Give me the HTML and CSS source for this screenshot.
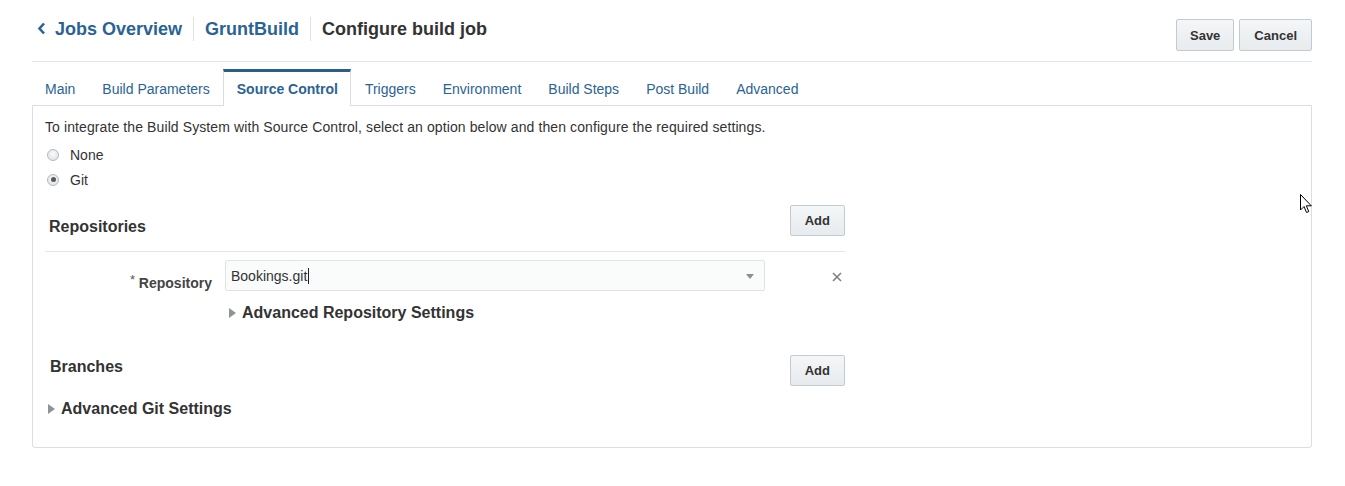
FILE: index.html
```html
<!DOCTYPE html>
<html>
<head>
<meta charset="utf-8">
<link rel="stylesheet" href="styles.css">
</head>
<body>
<div class="page">
  <div class="header">
    <div class="crumbs">
      <a class="crumb back">
        <svg class="chev" width="9" height="13" viewBox="0 0 9 13"><polyline points="7,1.5 2.5,6.5 7,11.5" fill="none" stroke="#2a6394" stroke-width="2.6"/></svg>
        Jobs Overview
      </a>
      <span class="sep"></span>
      <a class="crumb">GruntBuild</a>
      <span class="sep"></span>
      <span class="crumb current">Configure build job</span>
    </div>
    <div class="actions">
      <button class="btn">Save</button>
      <button class="btn">Cancel</button>
    </div>
  </div>

  <div class="tabs">
    <div class="tab">Main</div>
    <div class="tab">Build Parameters</div>
    <div class="tab active">Source Control</div>
    <div class="tab">Triggers</div>
    <div class="tab">Environment</div>
    <div class="tab">Build Steps</div>
    <div class="tab">Post Build</div>
    <div class="tab">Advanced</div>
  </div>

  <div class="panel">
    <p class="intro">To integrate the Build System with Source Control, select an option below and then configure the required settings.</p>
    <div class="radios">
      <label class="radio"><span class="dot"></span>None</label>
      <label class="radio"><span class="dot checked"></span>Git</label>
    </div>

    <div class="section">
      <div class="section-head bordered">
        <h3 class="section-title">Repositories</h3>
        <button class="btn">Add</button>
      </div>
      <div class="repo-row">
        <label class="field-label"><span class="req">*</span> Repository</label>
        <div class="select">
          <span class="select-text">Bookings.git<span class="caret"></span></span>
          <span class="select-arrow"></span>
        </div>
        <span class="remove">
          <svg width="10" height="10" viewBox="0 0 10 10"><path d="M1 1 L9 9 M9 1 L1 9" stroke="#7b8287" stroke-width="1.6"/></svg>
        </span>
      </div>
      <div class="disclosure repo-adv"><span class="tri"></span>Advanced Repository Settings</div>
    </div>

    <div class="section">
      <div class="section-head branches">
        <h3 class="section-title">Branches</h3>
        <button class="btn">Add</button>
      </div>
      <div class="disclosure git-adv"><span class="tri"></span>Advanced Git Settings</div>
    </div>
  </div>
</div>
<svg class="cursor" width="13" height="21" viewBox="0 0 13 21"><path d="M0.5 0.5 L0.5 16 L4 12.5 L6.5 18.5 L8.8 17.5 L6.3 11.8 L11.3 11.8 Z" fill="#fff" stroke="#000" stroke-width="1"/></svg>
</body>
</html>
```

FILE: styles.css
```css
* { box-sizing: border-box; }
html, body { margin: 0; padding: 0; background: #fff; }
body {
  font-family: "Liberation Sans", Arial, sans-serif;
  color: #333;
  position: relative;
  width: 1345px;
  height: 486px;
  overflow: hidden;
}
.page {
  margin-left: 32px;
  width: 1280px;
}
.header {
  display: flex;
  justify-content: space-between;
  height: 62px;
  border-bottom: 1px solid #e3e6e8;
}
.crumbs {
  display: flex;
  align-items: center;
  height: 24px;
  margin-top: 17px;
  padding-left: 5px;
}
.crumb {
  font-size: 18px;
  font-weight: bold;
  color: #2a6394;
  line-height: 24px;
  display: flex;
  align-items: center;
  white-space: nowrap;
}
.crumb.current { color: #333; }
.chev { margin-right: 9px; margin-top: -1px; }
.sep {
  width: 1px;
  height: 24px;
  background: #dde1e4;
  margin: 0 11px;
}
.actions {
  display: flex;
  gap: 5px;
  margin-top: 19px;
}
.btn {
  font-family: "Liberation Sans", Arial, sans-serif;
  font-size: 13px;
  font-weight: bold;
  color: #333;
  height: 32px;
  padding: 0 14px;
  border: 1px solid #c3cbd2;
  border-radius: 2px;
  background: linear-gradient(#f4f6f7, #e7ebee);
}
.actions .btn:first-child { padding: 0 13px; }
.tabs {
  display: flex;
  height: 44px;
  padding-top: 7px;
}
.tab {
  font-size: 14px;
  color: #2a6394;
  padding: 0 12.5px;
  height: 37px;
  line-height: 34px;
  border: 1px solid transparent;
  border-top: 3px solid transparent;
  border-bottom: none;
  white-space: nowrap;
}
.tab:first-child { padding-left: 12px; }
.tab.active {
  font-weight: bold;
  border-color: #d9dde0;
  border-top-color: #2c5f87;
  background: #fff;
  position: relative;
  z-index: 1;
}
.panel {
  margin-top: -1px;
  width: 1280px;
  height: 343px;
  border: 1px solid #dadee1;
  border-radius: 0 0 3px 3px;
  padding: 12px 12px 0 12px;
}
.intro {
  margin: 0;
  font-size: 14px;
  letter-spacing: 0.1px;
  line-height: 18px;
  color: #333;
}
.radios {
  margin-top: 6px;
  display: flex;
  flex-direction: column;
}
.radio {
  display: flex;
  align-items: center;
  height: 25px;
  font-size: 14px;
  color: #333;
  padding-left: 2px;
}
.dot {
  width: 12px;
  height: 12px;
  border-radius: 50%;
  border: 1px solid #b5b9bc;
  background: radial-gradient(circle at 50% 40%, #fafafa, #dcdfe1);
  margin-right: 11px;
  position: relative;
}
.dot.checked::after {
  content: "";
  position: absolute;
  left: 2.5px;
  top: 2.5px;
  width: 5px;
  height: 5px;
  border-radius: 50%;
  background: #555a5e;
}
.section {
  width: 800px;
}
.section-head {
  display: flex;
  justify-content: space-between;
  align-items: flex-end;
}
.section-head.bordered {
  margin-top: 13px;
  padding-bottom: 15px;
  border-bottom: 1px solid #e3e6e8;
}
.section-head .btn { height: 31px; }
.section-title {
  margin: 0 0 0 4px;
  font-size: 16px;
  line-height: 20px;
  font-weight: bold;
  color: #333;
  transform: translateY(1px);
}
.repo-row {
  display: flex;
  align-items: center;
  margin-top: 8px;
  height: 31px;
}
.field-label {
  width: 167px;
  text-align: right;
  font-size: 14px;
  font-weight: bold;
  color: #444;
  padding-top: 12px;
  white-space: nowrap;
}
.req { font-weight: normal; color: #555; font-size: 13px; vertical-align: 4px; }
.select {
  margin-left: 13px;
  width: 540px;
  height: 31px;
  border: 1px solid #dfe3e6;
  border-radius: 2px;
  background: #fafbfb;
  display: flex;
  align-items: center;
  justify-content: space-between;
  padding: 0 10px 0 5px;
}
.select-text {
  font-size: 14px;
  color: #333;
  display: flex;
  align-items: center;
}
.caret {
  display: inline-block;
  width: 1px;
  height: 16px;
  background: #222;
  margin-left: 1px;
}
.select-arrow {
  width: 0;
  height: 0;
  border-left: 4px solid transparent;
  border-right: 4px solid transparent;
  border-top: 5px solid #8a9095;
  margin-top: 2px;
}
.remove {
  margin-left: 67px;
  display: flex;
  margin-top: 2px;
}
.disclosure {
  display: flex;
  align-items: center;
  font-size: 16px;
  font-weight: bold;
  color: #333;
  line-height: 20px;
}
.tri {
  width: 0;
  height: 0;
  border-top: 5px solid transparent;
  border-bottom: 5px solid transparent;
  border-left: 7px solid #8d9398;
  margin-right: 6px;
}
.repo-adv {
  margin-top: 12px;
  padding-left: 184px;
}
.branches {
  margin-top: 32px;
}
.branches .section-title { margin-left: 5px; transform: translateY(-9px); }
.git-adv {
  margin-top: 13px;
  padding-left: 3px;
}
.cursor {
  position: absolute;
  left: 1300px;
  top: 194px;
}
```
